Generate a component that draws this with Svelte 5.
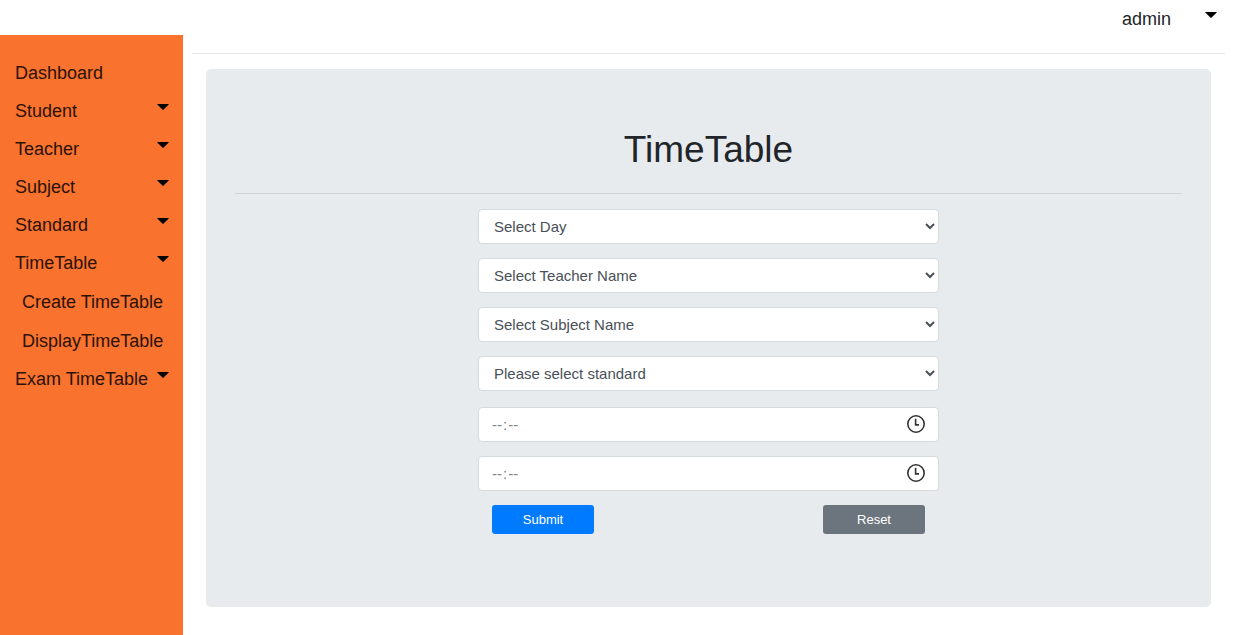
<script>
  const menu = [
    { label: 'Student' },
    { label: 'Teacher' },
    { label: 'Subject' },
    { label: 'Standard' },
    { label: 'TimeTable', children: ['Create TimeTable', 'DisplayTimeTable'] },
    { label: 'Exam TimeTable' }
  ];
  const selects = [
    { id: 'day', label: 'Select Day' },
    { id: 'teacher', label: 'Select Teacher Name' },
    { id: 'subject', label: 'Select Subject Name' },
    { id: 'standard', label: 'Please select standard' }
  ];
  const times = [
    { id: 'start', label: 'Start time' },
    { id: 'end', label: 'End time' }
  ];
</script>

{#snippet caret()}
  <svg class="caret" viewBox="0 0 12 6" aria-hidden="true"><path d="M0.8 0h10.4q1 0 0.3 0.8L6.6 5.6q-0.6 0.6-1.2 0L0.5 0.8Q-0.2 0 0.8 0z" /></svg>
{/snippet}

<div class="page">
  <nav class="sidebar">
    <a class="link" href="#dashboard">Dashboard</a>
    {#each menu as item}
      <button class="toggle" type="button" aria-expanded={!!item.children}>
        <span>{item.label}</span>
        {@render caret()}
      </button>
      {#each item.children ?? [] as child}
        <a class="link sub" href="#timetable">{child}</a>
      {/each}
    {/each}
  </nav>

  <div class="content">
    <header>
      <button class="user" type="button">
        <span>admin</span>
        {@render caret()}
      </button>
    </header>

    <main>
      <h1>TimeTable</h1>
      <hr />
      <form onsubmit={(e) => e.preventDefault()}>
        <div class="group">
          {#each selects as s}
            <select id={s.id} aria-label={s.label}>
              <option value="">{s.label}</option>
            </select>
          {/each}
        </div>
        <div class="group">
          {#each times as t}
            <div class="time">
              <input id={t.id} type="time" aria-label={t.label} />
              <svg viewBox="0 0 18 18" aria-hidden="true">
                <circle cx="9" cy="9" r="8.2" />
                <path d="M8.6 3.8v6.1H12" />
              </svg>
            </div>
          {/each}
        </div>
        <div class="actions">
          <button class="submit" type="submit">Submit</button>
          <button class="reset" type="reset">Reset</button>
        </div>
      </form>
    </main>
  </div>
</div>

<style>
  :global(body) {
    margin: 0;
    background: #fff;
  }
  .page {
    display: flex;
    min-height: 100vh;
    font-family: 'Liberation Sans', Arial, sans-serif;
    font-size: 18px;
    color: #212529;
  }
  .page :global(*) {
    box-sizing: border-box;
  }
  button,
  select,
  input {
    font-family: inherit;
    margin: 0;
  }
  .sidebar {
    flex: 0 0 183px;
    display: flex;
    flex-direction: column;
    margin-top: 35px;
    padding: 18px 0;
    background: #f9722e;
  }
  .link,
  .toggle {
    display: flex;
    align-items: center;
    height: 39px;
    padding: 0 14px 0 15px;
    border: 0;
    background: none;
    font-size: 18px;
    line-height: 22px;
    color: #2b1207;
    text-decoration: none;
    white-space: nowrap;
    cursor: pointer;
  }
  .toggle {
    height: 38px;
    justify-content: space-between;
  }
  .sub {
    padding: 0 0 0 22px;
  }
  .caret {
    flex: none;
    width: 12px;
    height: 6px;
    margin-bottom: 8px;
    fill: #000;
  }
  .content {
    flex: 1;
    min-width: 0;
    padding: 0 9px 28px;
  }
  header {
    display: flex;
    justify-content: flex-end;
    height: 54px;
    padding: 8px 8px 0;
    border-bottom: 1px solid #e4e5e6;
  }
  .user {
    display: flex;
    align-items: center;
    gap: 34px;
    height: 22px;
    padding: 0;
    border: 0;
    background: none;
    font-size: 18px;
    color: #212529;
    cursor: pointer;
  }
  main {
    margin: 15px 14px 0;
    padding: 59px 29px 73px;
    border-radius: 5px;
    background: #e7ebee;
  }
  h1 {
    margin: 0;
    font-size: 37px;
    font-weight: 400;
    line-height: 44px;
    text-align: center;
  }
  hr {
    margin: 21px 0 15px;
    border: 0;
    border-top: 1px solid #d0d4d7;
  }
  form {
    max-width: 461px;
    margin: 0 auto;
  }
  .group {
    display: grid;
    gap: 14px;
    margin-bottom: 16px;
  }
  .group + .group {
    margin-bottom: 14px;
  }
  select,
  input {
    display: block;
    width: 100%;
    height: 35px;
    border: 1px solid #d5dade;
    border-radius: 4px;
    background: #fff;
    font-size: 15px;
    color: #495057;
  }
  select {
    padding: 0 0 0 11px;
  }
  input {
    padding: 0 12px;
  }
  .time {
    position: relative;
  }
  .time svg {
    position: absolute;
    top: 8px;
    right: 14px;
    width: 18px;
    height: 18px;
    fill: none;
    stroke: #333;
    stroke-width: 1.6;
    pointer-events: none;
  }
  input::-webkit-datetime-edit {
    color: #808488;
  }
  input::-webkit-datetime-edit-ampm-field {
    display: none;
  }
  input::-webkit-calendar-picker-indicator {
    opacity: 0;
  }
  .actions {
    display: flex;
    justify-content: space-between;
    padding: 0 14px;
  }
  .actions button {
    width: 102px;
    height: 29px;
    padding: 0;
    border: 0;
    border-radius: 3px;
    font-size: 13px;
    color: #fff;
    cursor: pointer;
  }
  .submit {
    background: #007bff;
  }
  .reset {
    background: #6c757d;
  }
</style>
